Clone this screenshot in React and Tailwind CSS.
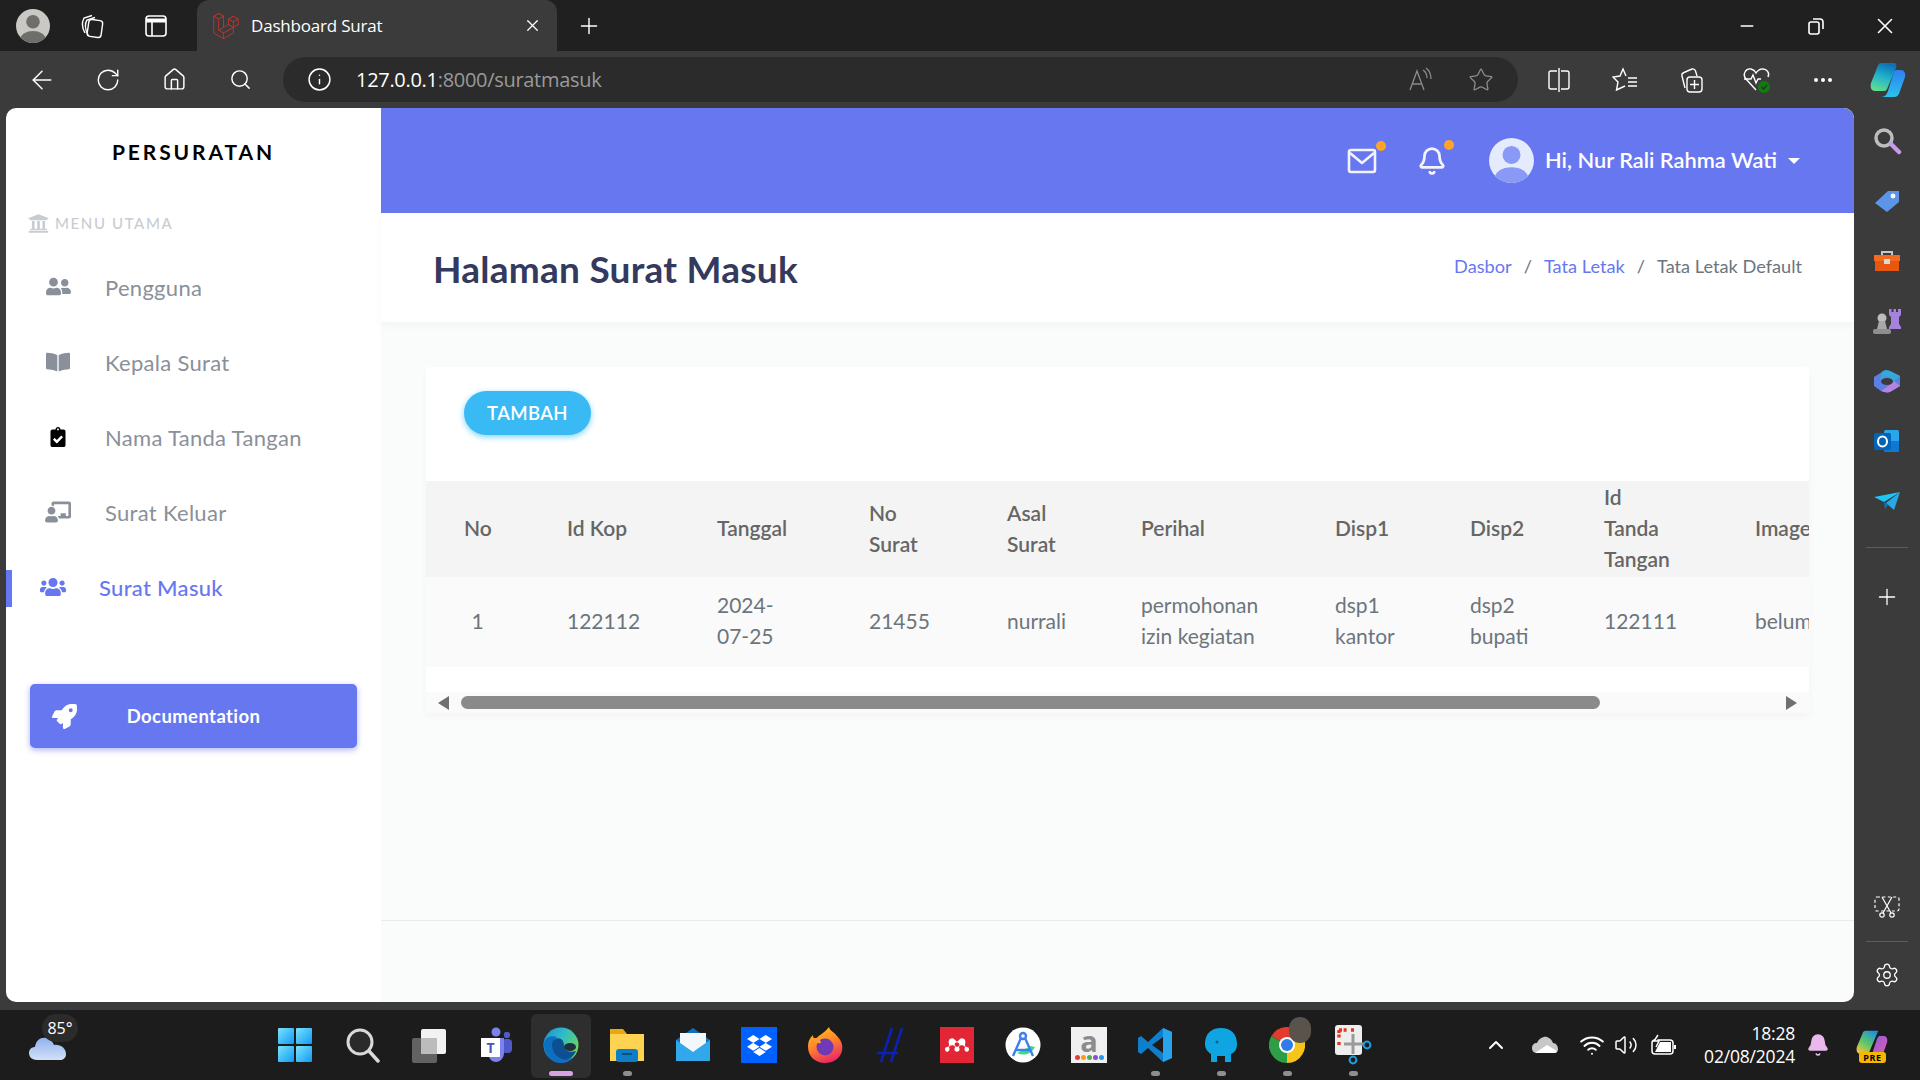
import {
  ArrowLeft, RotateCw, Home, Search, Info, Star, Plus, X, Minus, ChevronUp, Settings, Ellipsis, Bell, Volume2, Wifi,
} from 'lucide-react';
import {
  FaUserFriends, FaBookOpen, FaClipboardCheck, FaChalkboardTeacher, FaUsers, FaRocket, FaUniversity, FaDropbox,
} from 'react-icons/fa';
import { SiLaravel, SiMendeley } from 'react-icons/si';

const menu = [
  { label: 'Pengguna', Icon: FaUserFriends, size: 25 },
  { label: 'Kepala Surat', Icon: FaBookOpen, size: 24 },
  { label: 'Nama Tanda Tangan', Icon: FaClipboardCheck, size: 20, dark: true },
  { label: 'Surat Keluar', Icon: FaChalkboardTeacher, size: 26 },
];

const columns = [
  { head: 'No', cell: '1', w: 'w-[103px]', center: true },
  { head: 'Id Kop', cell: '122112', w: 'w-[150px]' },
  { head: 'Tanggal', cell: ['2024-', '07-25'], w: 'w-[152px]' },
  { head: ['No', 'Surat'], cell: '21455', w: 'w-[138px]' },
  { head: ['Asal', 'Surat'], cell: 'nurrali', w: 'w-[134px]' },
  { head: 'Perihal', cell: ['permohonan', 'izin kegiatan'], w: 'w-[194px]' },
  { head: 'Disp1', cell: ['dsp1', 'kantor'], w: 'w-[135px]' },
  { head: 'Disp2', cell: ['dsp2', 'bupati'], w: 'w-[134px]' },
  { head: ['Id', 'Tanda', 'Tangan'], cell: '122111', w: 'w-[151px]' },
  { head: 'Image', cell: 'belum ada', w: 'w-[200px]' },
];

function Lines({ value }) {
  if (!Array.isArray(value)) return value;
  return value.map((line) => <div key={line}>{line}</div>);
}

function Avatar({ size, bg, fg }) {
  return (
    <svg width={size} height={size} viewBox="0 0 40 40" className="shrink-0">
      <defs>
        <clipPath id={`av-${size}`}><circle cx="20" cy="20" r="20" /></clipPath>
      </defs>
      <g clipPath={`url(#av-${size})`}>
        <rect width="40" height="40" fill={bg} />
        <circle cx="20" cy="15" r="8" fill={fg} />
        <ellipse cx="20" cy="36" rx="15" ry="10" fill={fg} />
      </g>
    </svg>
  );
}

function ToolIcon({ children, w = 'w-[66px]' }) {
  return <div className={`${w} flex items-center justify-center shrink-0`}>{children}</div>;
}

function CollectionsIcon() {
  return (
    <svg width="26" height="26" viewBox="0 0 26 26" fill="none" stroke="#fff" strokeWidth="1.4">
      <rect x="9" y="7" width="14" height="17" rx="3" transform="rotate(8 16 15)" />
      <path d="M6 20 C3 15 3 9 5 5 L13 2.5" />
      <path d="M9 22 C6 16 6 10 8 7 L16 4.5" />
    </svg>
  );
}

function TitleBar() {
  return (
    <div className="h-[51px] bg-[#202020] flex items-end shrink-0">
      <div className="w-[197px] h-[51px] flex items-center">
        <div className="w-[66px] flex justify-center"><Avatar size={34} bg="#c9c8c4" fg="#6e6e6a" /></div>
        <div className="w-[52px] flex justify-center"><CollectionsIcon /></div>
        <div className="w-[76px] flex justify-center">
          <svg width="22" height="22" viewBox="0 0 22 22" fill="none" stroke="#fff" strokeWidth="1.6">
            <rect x="1" y="1" width="20" height="20" rx="3" />
            <path d="M1 5.5 H21" strokeWidth="4" />
            <path d="M7 6 V21" />
          </svg>
        </div>
      </div>
      <div className="w-[360px] h-[51px] bg-[#3b3b3b] rounded-t-[12px] flex items-center text-white pl-[16px] pr-[15px]">
        <SiLaravel size={26} color="#c5352b" />
        <span className="ml-[12px] flex-1 text-[17px] font-['Open_Sans',sans-serif] tracking-[-0.2px]">Dashboard Surat</span>
        <X size={19} strokeWidth={1.6} />
      </div>
      <div className="w-[64px] h-[51px] flex items-center justify-center text-white"><Plus size={26} strokeWidth={1.3} /></div>
      <div className="flex-1" />
      <div className="h-[51px] flex items-center text-white">
        <ToolIcon w="w-[69px]"><Minus size={20} strokeWidth={1.6} /></ToolIcon>
        <ToolIcon w="w-[69px]">
          <svg width="16" height="18" viewBox="0 0 16 18" fill="none" stroke="#fff" strokeWidth="1.6">
            <rect x="1" y="5" width="10" height="12" rx="2" />
            <path d="M5 2 H12 a3 3 0 0 1 3 3 V12" />
          </svg>
        </ToolIcon>
        <ToolIcon w="w-[70px]"><X size={26} strokeWidth={1.5} /></ToolIcon>
      </div>
    </div>
  );
}

function Toolbar() {
  return (
    <div className="h-[57px] flex items-start shrink-0 text-white">
      <div className="h-[51px] w-[283px] pl-[9px] flex items-center mt-[3px]">
        <ToolIcon><ArrowLeft size={30} strokeWidth={1.2} /></ToolIcon>
        <ToolIcon><RotateCw size={26} strokeWidth={1.3} /></ToolIcon>
        <ToolIcon><Home size={25} strokeWidth={1.4} /></ToolIcon>
        <ToolIcon><Search size={23} strokeWidth={1.5} /></ToolIcon>
      </div>
      <div className="w-[1235px] h-[45px] mt-[6px] rounded-full bg-[#2b2b2b] flex items-center pl-[24px]">
        <Info size={25} strokeWidth={1.4} />
        <span className="ml-[24px] flex-1 text-[20px] font-['Open_Sans',sans-serif] tracking-[-0.3px]">
          127.0.0.1<span className="text-[#9a9a9a]">:8000/suratmasuk</span>
        </span>
        <svg width="26" height="26" viewBox="0 0 26 26" fill="none" stroke="#8c8c8c" strokeWidth="1.3" className="mr-[34px]">
          <path d="M2 23 L9 4 L16 23 M4.5 17 H13.5" />
          <path d="M15 3 C18 5 19 8 19 11 M18 1 C22 4 23 8 23 12" />
        </svg>
        <Star size={26} strokeWidth={1.2} color="#8c8c8c" className="mr-[24px]" />
      </div>
      <div className="h-[51px] flex items-center mt-[3px] pl-[8px]">
        <ToolIcon>
          <svg width="24" height="26" viewBox="0 0 24 26" fill="none" stroke="#fff" strokeWidth="1.4">
            <path d="M10 4 H4 a2 2 0 0 0 -2 2 V20 a2 2 0 0 0 2 2 H10 M14 4 H20 a2 2 0 0 1 2 2 V20 a2 2 0 0 1 -2 2 H14 M12 1 V25" />
          </svg>
        </ToolIcon>
        <ToolIcon>
          <svg width="26" height="26" viewBox="0 0 26 26" fill="none" stroke="#fff" strokeWidth="1.4">
            <path d="M14 9 L11 2 L8 9 L1 10 L6 15 L4.5 23 L13 19" />
            <path d="M16 11 H25 M16 15 H25 M16 19 H25" />
          </svg>
        </ToolIcon>
        <ToolIcon>
          <svg width="28" height="28" viewBox="0 0 28 28" fill="none" stroke="#fff" strokeWidth="1.4">
            <path d="M8 22 L5 10 a3 3 0 0 1 2-3.5 L15 3 a3 3 0 0 1 3.5 2 L20 10" />
            <rect x="10" y="11" width="15" height="15" rx="3" />
            <path d="M17.5 14 V23 M13 18.5 H22" />
          </svg>
        </ToolIcon>
        <ToolIcon>
          <svg width="30" height="28" viewBox="0 0 30 28" fill="none" stroke="#fff" strokeWidth="1.4">
            <path d="M14 24 L4 13 C0 8 4 2 9 3 C11 3.5 13 5 14 7 C15 5 18 3 20 3 C25 2.5 28 7 26 11" />
            <path d="M2 13 H9 L11 9 L14 17 L16 13 H19" />
            <circle cx="22" cy="21" r="6" fill="#107c10" stroke="none" />
            <path d="M19.5 21 L21.5 23 L25 19" stroke="#2b2b2b" strokeWidth="1.2" />
          </svg>
        </ToolIcon>
        <ToolIcon><Ellipsis size={24} strokeWidth={2} /></ToolIcon>
        <ToolIcon w="w-[64px]"><Copilot size={36} /></ToolIcon>
      </div>
    </div>
  );
}

function Copilot({ size }) {
  return (
    <svg width={size} height={size} viewBox="0 0 36 36">
      <defs>
        <linearGradient id="cpa" x1="0.6" y1="0" x2="0.3" y2="1">
          <stop offset="0" stopColor="#0c6fb8" />
          <stop offset="0.5" stopColor="#22b5c9" />
          <stop offset="1" stopColor="#62dd8e" />
        </linearGradient>
        <linearGradient id="cpb" x1="0" y1="0" x2="0" y2="1">
          <stop offset="0" stopColor="#2f7ff0" />
          <stop offset="1" stopColor="#29c3ee" />
        </linearGradient>
      </defs>
      <path d="M11 1 H24 C26 1 27 3 26 6 L17 27 a3 3 0 0 1 -3 2 H5 C1 29 0 25 1 21 L7 6 C8 3 9 1 11 1 Z" fill="url(#cpa)" />
      <path d="M26 8 H31 C34 8 36 11 35 15 L30 29 C29 33 27 35 24 35 H11 C15 35 17 32 18 29 L24 10 C24.5 9 25 8 26 8 Z" fill="url(#cpb)" />
    </svg>
  );
}

function Sidebar() {
  return (
    <aside className="w-[375px] bg-white flex flex-col shrink-0 font-['Lato',sans-serif]">
      <div className="h-[72px] flex items-end justify-center pb-[18px] text-[21px] font-bold tracking-[2.9px] text-black leading-none">
        PERSURATAN
      </div>
      <div className="h-[42px] mt-[22px] pl-[22px] flex items-center text-[15px] text-[#c8ccd2] tracking-[1.6px] font-medium">
        <FaUniversity size={21} />
        <span className="ml-[6px] mt-[1px]">MENU UTAMA</span>
      </div>
      <ul className="mt-[6px] flex flex-col">
        {menu.map(({ label, Icon, size, dark }) => (
          <li key={label} className="h-[75px] flex items-center text-[22px] text-[#8a9099]">
            <span className={`w-[99px] pl-[5px] -mt-[2px] flex justify-center ${dark ? 'text-black' : ''}`}>
              <Icon size={size} />
            </span>
            <span className="tracking-[0.3px]">{label}</span>
          </li>
        ))}
        <li className="h-[75px] flex items-center text-[22px] text-[#6777ef] relative font-medium">
          <span className="absolute left-0 top-[20px] w-[6px] h-[37px] bg-[#6777ef]" />
          <span className="w-[93px] -mt-[2px] flex justify-center"><FaUsers size={26} /></span>
          <span className="tracking-[0.3px]">Surat Masuk</span>
        </li>
      </ul>
      <div className="mx-[24px] mt-[59px] h-[64px] rounded-[5px] bg-[#6777ef] shadow-[0_2px_6px_#acb5f6] flex items-center text-white font-bold text-[18.5px]">
        <FaRocket size={25} className="ml-[22px]" />
        <span className="flex-1 text-center mr-[47px] tracking-[0.4px] mt-[1px]">Documentation</span>
      </div>
    </aside>
  );
}

function Navbar() {
  return (
    <header className="h-[105px] bg-[#6777ef] rounded-tr-[10px] flex items-center justify-end shrink-0 text-white font-['Lato',sans-serif]">
      <div className="relative w-[70px] flex justify-center">
        <svg width="30" height="26" viewBox="0 0 30 26" fill="none" stroke="#f3f4fd" strokeWidth="2.6" strokeLinejoin="round">
          <rect x="2" y="2" width="26" height="22" rx="2" />
          <path d="M3 5 L15 15 L27 5" />
        </svg>
        <span className="absolute top-[-7px] right-[11px] w-[10px] h-[10px] rounded-full bg-[#ffa426]" />
      </div>
      <div className="relative w-[70px] flex justify-center">
        <Bell size={30} strokeWidth={2.2} color="#f3f4fd" />
        <span className="absolute top-[-6px] right-[13px] w-[10px] h-[10px] rounded-full bg-[#ffa426]" />
      </div>
      <div className="ml-[22px]"><Avatar size={45} bg="#e3ebfd" fg="#8a98f6" /></div>
      <span className="ml-[11px] text-[21.8px] font-semibold">Hi, Nur Rali Rahma Wati</span>
      <span className="ml-[11px] mr-[54px] w-0 h-0 border-x-[6px] border-x-transparent border-t-[6px] border-t-white" />
    </header>
  );
}

function ScrollArrow({ right }) {
  return (
    <svg width="11" height="14" viewBox="0 0 11 14" fill="#6f6f6f" className="shrink-0">
      <path d={right ? 'M0 0 L11 7 L0 14 Z' : 'M11 0 L0 7 L11 14 Z'} />
    </svg>
  );
}

function Content() {
  return (
    <main className="flex-1 min-w-0 flex flex-col bg-[#fafbfb] font-['Lato',sans-serif]">
      <Navbar />
      <div className="h-[109px] bg-white shadow-[0_4px_8px_rgba(0,0,0,0.03)] flex items-center justify-between pl-[52px] pr-[52px] shrink-0">
        <h1 className="text-[37px] font-bold text-[#34395e] tracking-[0.25px] mt-[2px]">Halaman Surat Masuk</h1>
        <div className="text-[18.2px] text-[#6c757d] flex items-center gap-[12px] -mt-[2px]">
          <span className="text-[#6777ef]">Dasbor</span>
          <span>/</span>
          <span className="text-[#6777ef]">Tata Letak</span>
          <span>/</span>
          <span>Tata Letak Default</span>
        </div>
      </div>
      <div className="flex-1 pt-[45px]">
        <section className="ml-[45px] w-[1383px] h-[346px] bg-white shadow-[0_4px_8px_rgba(0,0,0,0.03)] rounded-[3px] overflow-hidden">
          <div className="h-[114px] pt-[24px] pl-[38px]">
            <button className="w-[127px] h-[44px] rounded-full bg-[#3abaf4] shadow-[0_2px_6px_#82d3f8] text-white text-[18.5px] font-semibold tracking-[0.4px] pt-[1px]">
              TAMBAH
            </button>
          </div>
          <div className="overflow-hidden">
            <table className="table-fixed w-[1391px] border-collapse text-[21px] leading-[31px]">
              <colgroup>
                {columns.map((c, i) => <col key={i} className={c.w} />)}
              </colgroup>
              <thead>
                <tr className="bg-[#f4f4f4] h-[96px] text-[#666666]">
                  {columns.map((c, i) => (
                    <th key={i} className={`pl-[38px] pb-[3px] font-semibold whitespace-nowrap ${c.center ? 'text-center pr-[38px]' : 'text-left'}`}>
                      <Lines value={c.head} />
                    </th>
                  ))}
                </tr>
              </thead>
              <tbody>
                <tr className="bg-[#fafafa] h-[90px] text-[#6c757d]">
                  {columns.map((c, i) => (
                    <td key={i} className={`pl-[38px] pb-[4px] whitespace-nowrap ${c.center ? 'text-center pr-[38px]' : 'text-left'}`}>
                      <Lines value={c.cell} />
                    </td>
                  ))}
                </tr>
              </tbody>
            </table>
          </div>
          <div className="mt-[25px] h-[21px] bg-[#fafafa] flex items-center pl-[12px] pr-[12px]">
            <ScrollArrow />
            <div className="ml-[12px] w-[1139px] h-[13px] rounded-full bg-[#8a8a8a]" />
            <div className="flex-1" />
            <ScrollArrow right />
          </div>
        </section>
      </div>
      <footer className="h-[82px] border-t border-[#e8ecee] shrink-0" />
    </main>
  );
}

function SidePanel() {
  return (
    <div className="w-[66px] shrink-0 flex flex-col items-center relative pt-[11px]">
      <div className="h-[60px] flex items-center justify-center -mt-[8px]">
        <svg width="30" height="30" viewBox="0 0 30 30" fill="none">
          <circle cx="12" cy="12" r="8" stroke="#bdbdbd" strokeWidth="3.5" />
          <path d="M19 18 L27 26" stroke="#c79be8" strokeWidth="4.5" strokeLinecap="round" />
        </svg>
      </div>
      <div className="h-[60px] flex items-center justify-center">
        <svg width="28" height="26" viewBox="0 0 28 26">
          <path d="M2 15 L15 3 H26 V14 L14 24 Z" fill="#5c95e8" />
          <circle cx="20" cy="8" r="2.4" fill="#fff" />
        </svg>
      </div>
      <div className="h-[60px] flex items-center justify-center">
        <svg width="28" height="24" viewBox="0 0 28 24">
          <path d="M9 7 V3 H19 V7" fill="none" stroke="#c7c7c7" strokeWidth="2" />
          <rect x="1" y="6" width="26" height="6" fill="#f26b21" />
          <rect x="2" y="12" width="24" height="10" fill="#e85710" />
          <rect x="11" y="10" width="6" height="5" fill="#d9d9d9" />
        </svg>
      </div>
      <div className="h-[60px] flex items-center justify-center">
        <svg width="30" height="28" viewBox="0 0 30 28">
          <circle cx="10" cy="11" r="4.5" fill="#bdbdbd" />
          <path d="M7 14 H13 L15 22 H5 Z" fill="#a8a8a8" />
          <rect x="1" y="22" width="18" height="5" rx="2" fill="#8e8e8e" />
          <path d="M17 2 H19.5 V5 H21.5 V2 H24 V5 H26 V2 H29 V8 L27 10 V17 L29 20 V22 H17 V20 L19 17 V10 L17 8 Z" fill="#a583dd" />
        </svg>
      </div>
      <div className="h-[60px] flex items-center justify-center">
        <svg width="28" height="24" viewBox="0 0 28 24">
          <path d="M9 3 C11 1 14 1 17 2 L27 7 V17 L17 23 C14 24 11 23 8 22 L1 17 V8 Z" fill="#5b7fe6" />
          <path d="M9 3 C11 1 14 1 17 2 L27 7 L21 12 L14 7 L7 11 Z" fill="#34a8d8" />
          <path d="M14 18 L21 12 L27 17 L17 23 C14 24 11 23 8 22 Z" fill="#b583e0" />
          <ellipse cx="14" cy="12.5" rx="6" ry="3.5" fill="#3b3b3b" />
        </svg>
      </div>
      <div className="h-[60px] flex items-center justify-center">
        <svg width="28" height="26" viewBox="0 0 28 26">
          <rect x="11" y="2" width="15" height="22" rx="1.5" fill="#28a8ea" />
          <path d="M11 13 L26 13 V24 H11 Z" fill="#0f78d4" />
          <rect x="1" y="5" width="17" height="17" rx="2" fill="#0364b8" />
          <ellipse cx="9.5" cy="13.5" rx="4.5" ry="5" fill="none" stroke="#fff" strokeWidth="2" />
        </svg>
      </div>
      <div className="h-[60px] flex items-center justify-center">
        <svg width="28" height="22" viewBox="0 0 28 22">
          <path d="M1 7 L27 2 L11 12 Z" fill="#1ec5f5" />
          <path d="M27 2 L21 20 L13 13 Z" fill="#28a9e6" />
          <path d="M11 12 L12 19 L15 15 Z" fill="#0b76ba" />
        </svg>
      </div>
      <div className="w-[42px] h-px bg-[#5c5c5c] mt-[16px]" />
      <div className="mt-[36px] text-white"><Plus size={26} strokeWidth={1.2} /></div>
      <div className="flex-1" />
      <div className="mb-[23px]">
        <svg width="26" height="24" viewBox="0 0 26 24" fill="none" stroke="#fff" strokeWidth="1.2">
          <rect x="1" y="3" width="24" height="14" rx="2" strokeDasharray="3 2.4" />
          <path d="M8 3 L17 19 M18 3 L9 19" />
          <circle cx="8" cy="21" r="2.2" />
          <circle cx="18" cy="21" r="2.2" />
        </svg>
      </div>
      <div className="w-[42px] h-px bg-[#5c5c5c]" />
      <div className="mt-[20px] mb-[14px] text-white"><Settings size={26} strokeWidth={1.2} /></div>
    </div>
  );
}

function Slot({ children, dot, active }) {
  return (
    <div className={`w-[66px] h-[70px] flex items-center justify-center relative shrink-0 ${active ? 'before:absolute before:inset-x-[3px] before:top-[4px] before:bottom-[2px] before:rounded-[6px] before:bg-[#2e2e2e]' : ''}`}>
      <div className="relative flex items-center justify-center">{children}</div>
      {dot && <span className="absolute bottom-[4px] w-[9px] h-[5px] rounded-full bg-[#8f8f8f]" />}
      {active && <span className="absolute bottom-[4px] w-[24px] h-[5px] rounded-full bg-[#d8a2e3]" />}
    </div>
  );
}

function Taskbar() {
  return (
    <div className="h-[70px] bg-[#1c1c1c] flex items-center shrink-0 text-white font-['Open_Sans',sans-serif]">
      <div className="w-[262px] h-[70px] relative shrink-0">
        <svg width="38" height="30" viewBox="0 0 38 30" className="absolute left-[29px] top-[22px]">
          <defs>
            <linearGradient id="wcl" x1="0" y1="0" x2="0" y2="1">
              <stop offset="0" stopColor="#8fb2ee" />
              <stop offset="1" stopColor="#d3e0f7" />
            </linearGradient>
          </defs>
          <path d="M8 28 C2 28 0 24 0 21 C0 17 3 15 6 15 C7 8 12 5 17 6 C21 7 24 10 25 13 C31 12 37 16 37 22 C37 26 34 28 31 28 Z" fill="url(#wcl)" />
        </svg>
        <div className="absolute left-[42px] top-[4px] w-[36px] h-[28px] rounded-full bg-[#2b2b2b] text-[16px] flex items-center justify-center">85°</div>
      </div>
      <Slot>
        <svg width="36" height="36" viewBox="0 0 36 36">
          <defs>
            <linearGradient id="win" x1="0" y1="0" x2="1" y2="1">
              <stop offset="0" stopColor="#7be3fb" />
              <stop offset="1" stopColor="#0f9bf5" />
            </linearGradient>
          </defs>
          <rect x="1" y="1" width="16" height="16" rx="1" fill="url(#win)" />
          <rect x="19" y="1" width="16" height="16" rx="1" fill="url(#win)" />
          <rect x="1" y="19" width="16" height="16" rx="1" fill="url(#win)" />
          <rect x="19" y="19" width="16" height="16" rx="1" fill="url(#win)" />
        </svg>
      </Slot>
      <div className="w-[2px] shrink-0" />
      <Slot>
        <svg width="36" height="36" viewBox="0 0 36 36" fill="none">
          <circle cx="15" cy="15" r="12" stroke="#d9d9d9" strokeWidth="3" fill="#2a2a2a" />
          <path d="M24 24 L33 34" stroke="#d9d9d9" strokeWidth="3.5" strokeLinecap="round" />
        </svg>
      </Slot>
      <Slot>
        <svg width="36" height="36" viewBox="0 0 36 36">
          <rect x="10" y="2" width="25" height="25" rx="2" fill="#f2f2f2" />
          <rect x="1" y="11" width="25" height="25" rx="2" fill="#6a6a6a" opacity="0.9" />
          <rect x="10" y="11" width="16" height="16" fill="#bcbcbc" />
        </svg>
      </Slot>
      <Slot>
        <svg width="36" height="36" viewBox="0 0 36 36">
          <circle cx="19" cy="5" r="4.5" fill="#7b83eb" />
          <circle cx="30" cy="8" r="3.2" fill="#5059c9" />
          <rect x="25" y="12" width="10" height="14" rx="4" fill="#5059c9" />
          <path d="M12 11 H27 V26 C27 31 23 35 19 35 C14 35 11 30 11 26 Z" fill="#7b83eb" />
        </svg>
        <span className="absolute left-[4px] top-[11px] w-[19px] h-[19px] bg-white text-[#4b53bc] text-[14px] font-bold flex items-center justify-center leading-none">T</span>
      </Slot>
      <Slot active>
        <svg width="36" height="38" viewBox="0 0 36 38" className="relative">
          <defs>
            <linearGradient id="edg" x1="0" y1="0" x2="1" y2="0.6">
              <stop offset="0" stopColor="#1a8fd6" />
              <stop offset="0.5" stopColor="#2fbcc9" />
              <stop offset="1" stopColor="#67d85f" />
            </linearGradient>
          </defs>
          <circle cx="18" cy="19" r="17.5" fill="url(#edg)" />
          <path d="M1 19 C1 11 8 9 14 11 C10 14 10 21 14 26 C19 32 26 34 31 31 C27 36 22 37 17 37 C8 37 1 28 1 19 Z" fill="#0e6fc0" />
          <path d="M9 19 C9 14 14 11 18 13 C22 15 20 21 23 24 C25 26 29 26 33 25 C30 32 24 35 19 33 C13 31 9 25 9 19 Z" fill="#0d4f93" />
          <ellipse cx="27" cy="21" rx="6" ry="4" fill="#22303a" />
        </svg>
      </Slot>
      <Slot dot>
        <svg width="36" height="36" viewBox="0 0 36 36">
          <path d="M1 2 H14 L18 7 H35 V33 H1 Z" fill="#e9a90e" />
          <rect x="1" y="7" width="34" height="27" fill="#ffd352" />
          <rect x="7" y="22" width="22" height="13" rx="3" fill="#0f7ec8" />
          <rect x="13" y="26" width="10" height="2" fill="#0b4f80" />
        </svg>
      </Slot>
      <Slot>
        <svg width="36" height="36" viewBox="0 0 36 36">
          <path d="M1 13 L18 1 L35 13 V34 H1 Z" fill="#0f6fbf" />
          <path d="M5 6 H31 V22 L18 30 L5 22 Z" fill="#f2f7fb" />
          <path d="M1 13 L18 25 L35 13 V34 H1 Z" fill="#30a8ea" />
        </svg>
      </Slot>
      <Slot>
        <span className="w-[36px] h-[36px] bg-[#0061fe] flex items-center justify-center"><FaDropbox size={25} color="#fff" /></span>
      </Slot>
      <Slot>
        <svg width="36" height="38" viewBox="0 0 36 38">
          <defs>
            <linearGradient id="ffx" x1="0.3" y1="0" x2="0.7" y2="1">
              <stop offset="0" stopColor="#ffc31f" />
              <stop offset="0.5" stopColor="#ff7a2e" />
              <stop offset="1" stopColor="#e8216a" />
            </linearGradient>
          </defs>
          <path d="M22 1 C23 5 26 5 30 10 C35 15 36 20 35 25 C33 33 26 37 18 37 C8 37 1 30 1 21 C1 15 3 12 6 9 C6 12 7 13 9 13 C11 9 17 8 22 1 Z" fill="url(#ffx)" />
          <circle cx="18" cy="21" r="8.5" fill="#6e3ab8" />
          <path d="M4 14 C8 10 14 13 14 17 C10 18 8 16 4 14 Z" fill="#ff9a2e" />
        </svg>
      </Slot>
      <Slot>
        <svg width="30" height="36" viewBox="0 0 30 36" fill="none" stroke="#0a22b8" strokeWidth="2.5">
          <path d="M16 1 L5 35 M26 1 L15 35" />
          <path d="M1 26 H22" />
        </svg>
      </Slot>
      <Slot>
        <span className="w-[34px] h-[36px] bg-[#e32636] flex items-center justify-center"><SiMendeley size={24} color="#fff" /></span>
      </Slot>
      <Slot>
        <svg width="36" height="36" viewBox="0 0 36 36">
          <circle cx="18" cy="18" r="17.5" fill="#fff" />
          <path d="M12 26 A13 13 0 0 0 30 20 L26 19 Z" fill="#3ddc84" />
          <g fill="none" stroke="#3f80ef" strokeWidth="2.4">
            <path d="M16 11 L8 29 M20 11 L28 29 M10 23 H26" />
            <circle cx="18" cy="9" r="3" />
          </g>
        </svg>
      </Slot>
      <Slot>
        <span className="w-[36px] h-[36px] bg-[#f0f0f0] flex flex-col items-center">
          <span className="text-[#8c8c8c] text-[29px] font-bold leading-[27px]">a</span>
          <span className="flex gap-[1px] mt-[1px]">
            {['bg-[#ec3a32]', 'bg-[#f59a23]', 'bg-[#4caf50]', 'bg-[#8a4fd0]', 'bg-[#2196f3]'].map((c) => (
              <span key={c} className={`w-[5px] h-[5px] rounded-full ${c}`} />
            ))}
          </span>
        </span>
      </Slot>
      <Slot dot>
        <svg width="36" height="36" viewBox="0 0 36 36">
          <path d="M26 1 L35 5 V31 L26 35 L11 21 L4 27 L1 25 V11 L4 9 L11 15 Z" fill="#0f7fcb" />
          <path d="M26 1 L35 5 V31 L26 35 Z" fill="#27a4ea" />
          <path d="M26 10 L15 18 L26 26 Z" fill="#1c1c1c" />
        </svg>
      </Slot>
      <Slot dot>
        <svg width="34" height="36" viewBox="0 0 34 36">
          <path d="M17 1 C27 1 33 7 33 17 C33 23 30 26 27 27 V35 H21 V29 H13 V35 H7 V27 C4 25 1 22 1 17 C1 7 7 1 17 1 Z" fill="#0fa5e3" />
          <circle cx="13" cy="15" r="1.5" fill="#0a5f8a" />
        </svg>
      </Slot>
      <Slot dot>
        <svg width="36" height="36" viewBox="0 0 36 36">
          <path d="M18 18 L33.6 9 A18 18 0 0 0 2.4 9 Z" fill="#e33b2e" />
          <path d="M18 18 L2.4 9 A18 18 0 0 0 18 36 Z" fill="#2e9e46" />
          <path d="M18 18 L18 36 A18 18 0 0 0 33.6 9 Z" fill="#f5c518" />
          <circle cx="18" cy="18" r="8" fill="#fff" />
          <circle cx="18" cy="18" r="6" fill="#2f7ce8" />
        </svg>
        <span className="absolute -right-[6px] -top-[10px] w-[22px] h-[26px] rounded-full bg-[#5a534c]" />
      </Slot>
      <Slot dot>
        <svg width="38" height="42" viewBox="0 0 38 42">
          <rect x="1" y="1" width="27" height="30" rx="3" fill="#eeeeee" />
          <path d="M5 6 H13 M17 6 H21 M5 6 V14 M5 18 V21" stroke="#d8391f" strokeWidth="3.4" strokeDasharray="3 1.6" fill="none" />
          <path d="M19 10 V30" stroke="#9a9a9a" strokeWidth="3" />
          <path d="M10 20 H30" stroke="#9a9a9a" strokeWidth="3" />
          <circle cx="33" cy="21" r="3.4" fill="none" stroke="#1ba1e2" strokeWidth="2" />
          <circle cx="19" cy="36" r="3.4" fill="none" stroke="#1ba1e2" strokeWidth="2" />
        </svg>
      </Slot>
      <div className="flex-1 flex items-center h-[70px]">
        <div className="w-[132px] flex justify-end shrink-0"><ChevronUp size={24} strokeWidth={2} className="mr-[10px]" /></div>
        <div className="w-[54px] flex justify-center shrink-0">
          <svg width="26" height="18" viewBox="0 0 26 18">
            <path d="M5 17 C1 17 0 14 0 12 C0 9 2 7 5 7 C7 2 12 0 15 1 C18 2 20 4 21 7 C24 7 26 10 26 13 C26 15 25 17 23 17 Z" fill="#c8c8c8" />
            <path d="M3 17 L15 9 L25 15 L23 17 Z" fill="#fff" />
          </svg>
        </div>
        <div className="w-[40px] flex justify-center shrink-0"><Wifi size={26} strokeWidth={1.8} /></div>
        <div className="w-[28px] flex justify-center shrink-0"><Volume2 size={24} strokeWidth={1.5} /></div>
        <div className="w-[48px] flex justify-center shrink-0">
          <svg width="26" height="22" viewBox="0 0 26 22" fill="none" stroke="#fff" strokeWidth="1.5">
            <rect x="1" y="6" width="21" height="14" rx="3" />
            <path d="M24 11 V15" strokeWidth="2" />
            <path d="M7 1 L3 7 H8 L5 13" fill="#1c1c1c" />
            <path d="M4 18 L9 8 H20 V18 Z" fill="#fff" stroke="none" />
          </svg>
        </div>
        <div className="w-[107px] text-right text-[17.5px] leading-[23px] tracking-[-0.2px] shrink-0">
          <div>18:28</div>
          <div>02/08/2024</div>
        </div>
        <div className="w-[46px] flex justify-center shrink-0">
          <Bell size={24} fill="#eab8ec" color="#eab8ec" strokeWidth={1.5} />
        </div>
        <div className="w-[61px] flex justify-center relative shrink-0">
          <svg width="34" height="32" viewBox="0 0 36 36">
            <defs>
              <linearGradient id="cpc" x1="0.8" y1="0" x2="0.2" y2="1">
                <stop offset="0" stopColor="#1f8fe0" />
                <stop offset="0.55" stopColor="#5dc66a" />
                <stop offset="1" stopColor="#f2c53b" />
              </linearGradient>
              <linearGradient id="cpd" x1="0" y1="0" x2="1" y2="1">
                <stop offset="0" stopColor="#7a5be6" />
                <stop offset="1" stopColor="#ef5fa7" />
              </linearGradient>
            </defs>
            <path d="M11 2 H25 L14 28 H5 C1 28 0 24 1 20 L7 6 C8 3 9 2 11 2 Z" fill="url(#cpc)" />
            <path d="M26 8 H31 C34 8 36 11 35 15 L30 29 C29 33 27 34 24 34 H12 C16 34 17 31 18 28 L24 10 Z" fill="url(#cpd)" />
          </svg>
          <span className="absolute left-[18px] top-[23px] w-[27px] h-[11px] rounded-[3px] bg-[#f5b800] text-black text-[9px] font-bold tracking-[0.6px] leading-[11px] text-center">PRE</span>
        </div>
      </div>
    </div>
  );
}

export default function App() {
  return (
    <div className="w-[1920px] h-[1080px] flex flex-col bg-[#3b3b3b] overflow-hidden">
      <TitleBar />
      <Toolbar />
      <div className="h-[894px] flex pl-[6px] shrink-0">
        <div className="w-[1848px] flex rounded-[10px] overflow-hidden shrink-0">
          <Sidebar />
          <Content />
        </div>
        <SidePanel />
      </div>
      <div className="h-[8px] shrink-0" />
      <Taskbar />
    </div>
  );
}
